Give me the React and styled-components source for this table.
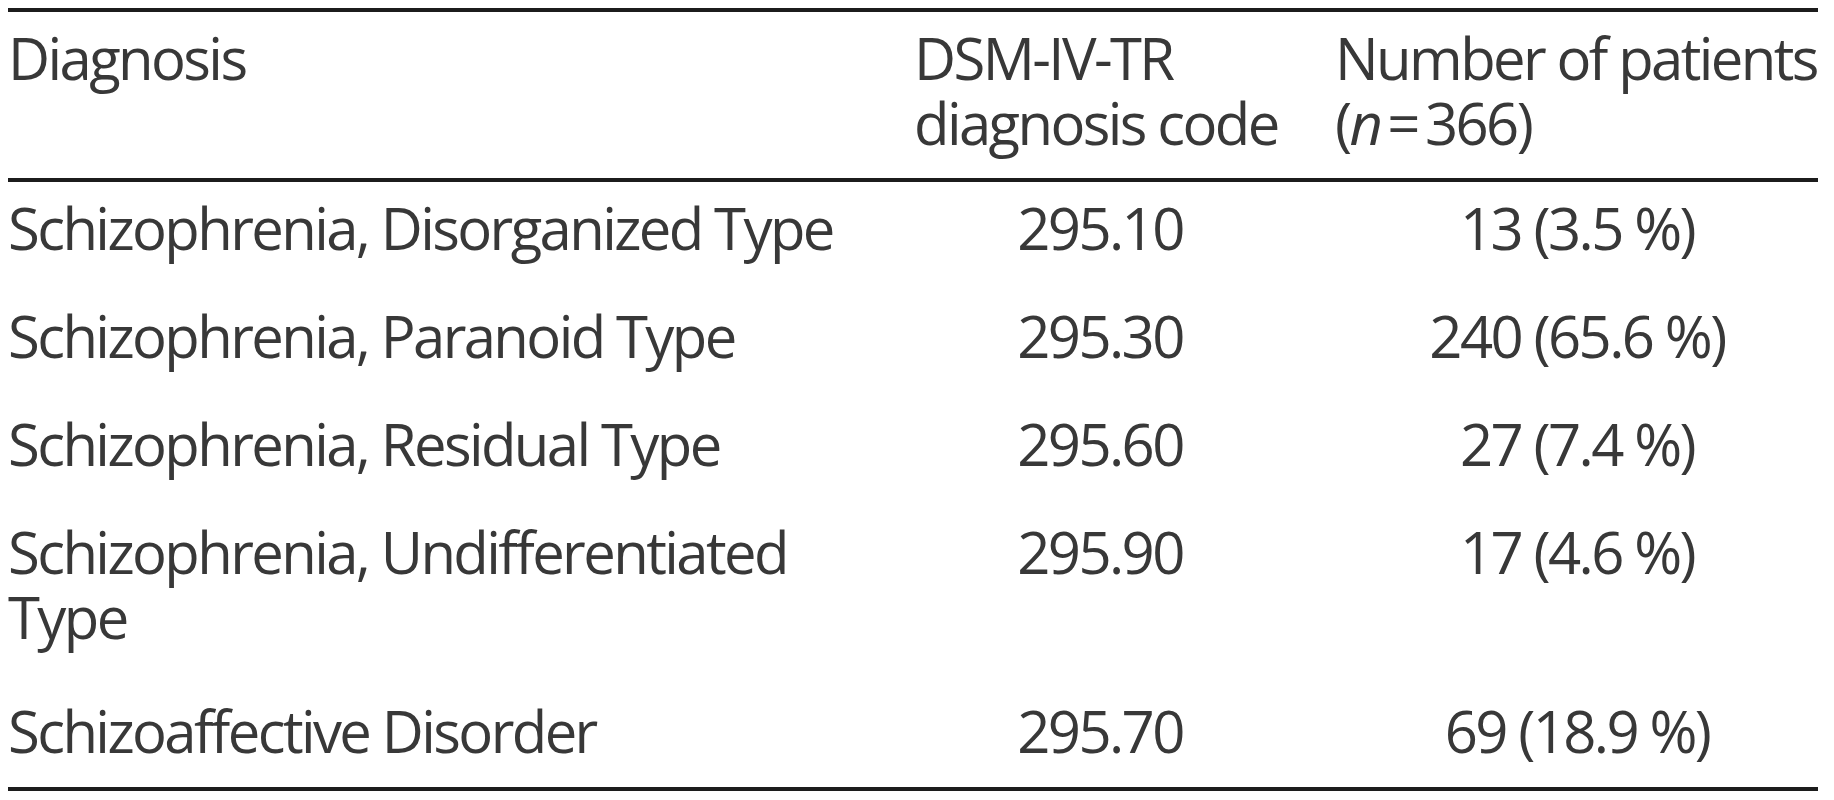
import React from 'react';
import styled, { createGlobalStyle } from 'styled-components';

const GlobalStyle = createGlobalStyle`
  body {
    margin: 8px;
    background: #ffffff;
  }
`;

const Table = styled.div`
  width: 1810px;
  font-family: 'Open Sans', 'Noto Sans', sans-serif;
  font-size: 58px;
  line-height: 65px;
  letter-spacing: -2.6px;
  color: #383838;
  border-bottom: 4px solid #1c1c1c;
`;

const Row = styled.div`
  display: grid;
  grid-template-columns: 857px 372px 484px;
  column-gap: 49px;
  padding: 13px 0 ${(p) => p.$bottom}px;
`;

const HeadRow = styled(Row)`
  border-top: 4px solid #1c1c1c;
  border-bottom: 4px solid #1c1c1c;
`;

const HeadCell = styled.div`
  text-align: left;
  white-space: nowrap;
`;

const Cell = styled.div`
  text-align: ${(p) => (p.$center ? 'center' : 'left')};
  white-space: nowrap;
`;

const rows = [
  { name: ['Schizophrenia, Disorganized Type'], code: '295.10', count: '13 (3.5 %)' },
  { name: ['Schizophrenia, Paranoid Type'], code: '295.30', count: '240 (65.6 %)' },
  { name: ['Schizophrenia, Residual Type'], code: '295.60', count: '27 (7.4 %)' },
  { name: ['Schizophrenia, Undifferentiated', 'Type'], code: '295.90', count: '17 (4.6 %)' },
  { name: ['Schizoaffective Disorder'], code: '295.70', count: '69 (18.9 %)' },
];

// bottom padding: wrapped rows sit a bit looser, the last row closes tighter
const bottomPad = (r, i) => {
  if (i === rows.length - 1) return 24;
  return r.name.length > 1 ? 36 : 30;
};

export default function App() {
  return (
    <>
      <GlobalStyle />
      <Table>
        <HeadRow $bottom={23}>
          <HeadCell>Diagnosis</HeadCell>
          <HeadCell>
            DSM-IV-TR
            <br />
            diagnosis code
          </HeadCell>
          <HeadCell>
            Number of patients
            <br />
            (<i>n</i>&#8201;=&#8201;366)
          </HeadCell>
        </HeadRow>
        {rows.map((r, i) => (
          <Row key={r.code} $bottom={bottomPad(r, i)}>
            <Cell>
              {r.name.map((line, j) => (
                <React.Fragment key={j}>
                  {j > 0 && <br />}
                  {line}
                </React.Fragment>
              ))}
            </Cell>
            <Cell $center>{r.code}</Cell>
            <Cell $center>{r.count}</Cell>
          </Row>
        ))}
      </Table>
    </>
  );
}
